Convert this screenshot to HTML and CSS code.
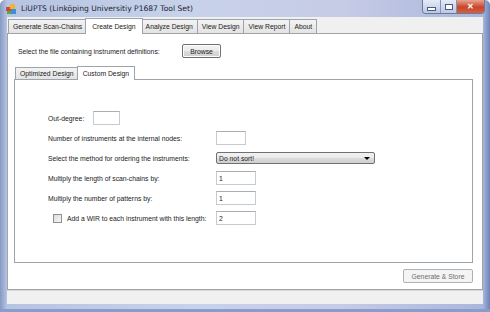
FILE: index.html
```html
<!DOCTYPE html>
<html>
<head>
<meta charset="utf-8">
	<title>LiUPTS</title>
	<link rel="stylesheet" href="styles.css">
</head>
<body>
	<div class="window">
		<div class="titlebar">
			<svg class="app-icon" width="11" height="10" viewBox="0 0 11 10">
				<rect x="0" y="3" width="5" height="4" fill="#d9442b"/>
				<rect x="4" y="0" width="5" height="5" fill="#f2b233"/>
				<rect x="5" y="5" width="5" height="5" fill="#3a8fd6"/>
				<rect x="1" y="7" width="4" height="3" fill="#5aa83a"/>
			</svg>
			<span class="title">LiUPTS (Linköping Universitiy P1687 Tool Set)</span>
			<div class="caption-btns">
				<span class="cap cap-min"><i></i></span>
				<span class="cap cap-max"><i></i></span>
				<span class="cap cap-close">&#x2715;</span>
			</div>
		</div>

		<div class="client">
			<ul class="tabs">
				<li>Generate Scan-Chains</li>
				<li class="active">Create Design</li>
				<li>Analyze Design</li>
				<li>View Design</li>
				<li>View Report</li>
				<li>About</li>
			</ul>
			<div class="tabpage">
				<div class="file-row">
					<span>Select the file containing instrument definitions:</span>
					<button class="btn">Browse</button>
				</div>

				<ul class="tabs inner">
					<li>Optimized Design</li>
					<li class="active">Custom Design</li>
				</ul>
				<div class="inner-page">
					<div class="row">
						<label class="short">Out-degree:</label>
						<input class="box tiny" type="text">
					</div>
					<div class="row">
						<label class="col">Number of instruments at the internal nodes:</label>
						<input class="box small" type="text">
					</div>
					<div class="row">
						<label class="col">Select the method for ordering the instruments:</label>
						<div class="combo">Do not sort!<span class="arrow"></span></div>
					</div>
					<div class="row">
						<label class="col">Multiply the length of scan-chains by:</label>
						<input class="box" type="text" value="1">
					</div>
					<div class="row">
						<label class="col">Multiply the number of patterns by:</label>
						<input class="box" type="text" value="1">
					</div>
					<div class="row">
						<label class="col check"><span class="checkbox"></span>Add a WIR to each instrument with this length:</label>
						<input class="box" type="text" value="2">
					</div>
				</div>

				<div class="actions">
					<button class="btn disabled">Generate &amp; Store</button>
				</div>
			</div>
			<div class="status"></div>
		</div>
	</div>
</body>
</html>
```

FILE: styles.css
```css
body,ul,li{padding: 0;margin: 0;list-style: none;}
body{background-color: #fff;font-family: "Liberation Sans", Arial, sans-serif;font-size: 6.8px;color: #222;}

.window{width: 490px;height: 312px;box-sizing: border-box;display: flex;flex-direction: column;padding: 0 7px 8px 7px;border-radius: 5px 5px 0 0;background: linear-gradient(to right, #8699c4 0, #b6c4e2 7px, #c8d2ea 40%, #c6cbe6 70%, #a9b6dc 483px, #6f82b6 100%);box-shadow: inset 0 -3px 0 #8a9ccb;}

.titlebar{height: 17px;display: flex;align-items: center;margin: 0 -7px;padding: 0 5px 0 6px;}
.app-icon{margin-right: 4px;}
.title{font-family: "DejaVu Sans", sans-serif;font-size: 7.6px;color: #1c2435;flex: 1;}
.caption-btns{display: flex;align-self: flex-start;border: 1px solid #6b7a9a;border-top: none;border-radius: 0 0 4px 4px;overflow: hidden;height: 13px;}
.cap{display: flex;align-items: center;justify-content: center;height: 13px;background: linear-gradient(#e4ebf6, #b9c8e2);border-right: 1px solid #8595b7;}
.cap-min{width: 17px;}
.cap-max{width: 15px;}
.cap-min i{width: 7px;height: 2px;background: #fff;border: 1px solid #4b5b80;margin-top: 4px;}
.cap-max i{width: 6px;height: 4px;border: 1px solid #4b5b80;background: #fff;}
.cap-close{width: 27px;border: none;background: linear-gradient(#e8a48e, #c8452b 55%, #d5603f);color: #fff;font-size: 8px;font-weight: bold;}

.client{flex: 1;display: flex;flex-direction: column;background-color: #f0f0f0;}

.tabs{display: flex;align-items: flex-end;height: 16px;padding-left: 1px;}
.tabs li{height: 13px;line-height: 13px;padding: 0 4px;border: 1px solid #9ea4ac;border-bottom: none;border-left: none;background: linear-gradient(#f3f3f3, #e3e3e3);color: #222;white-space: nowrap;}
.tabs li:first-child{border-left: 1px solid #9ea4ac;}
.tabs li.active{height: 15px;line-height: 15px;background: #fff;border-left: 1px solid #9ea4ac;margin: 0 -1px 0 -2px;padding: 0 6px;position: relative;z-index: 1;margin-bottom: -1px;}

.tabpage{flex: 1;display: flex;flex-direction: column;background: #fff;border: 1px solid #9ea4ac;padding: 10px 9px 6px 6px;}

.file-row{display: flex;align-items: center;height: 14px;padding-left: 4px;}
.file-row span{width: 164px;}

.btn{font-family: inherit;font-size: 6.8px;color: #222;height: 14px;padding: 0;border: 1px solid #707070;border-radius: 2px;background: linear-gradient(#f2f2f2 0, #ebebeb 50%, #dddddd 50%, #cfcfcf 100%);box-shadow: inset 0 0 0 1px #fcfcfc;}
.file-row .btn{width: 39px;}

.tabs.inner{margin-top: 8px;height: 13px;}
.tabs.inner li{height: 11px;line-height: 11px;padding: 0 4px;}
.tabs.inner li.active{height: 13px;line-height: 13px;padding: 0 5px;}

.inner-page{flex: 1;border: 1px solid #9ea4ac;background: #fff;padding: 31px 0 0 33px;display: flex;flex-direction: column;gap: 6px;}

.row{display: flex;align-items: center;height: 14px;}
.row label.short{margin-right: 9px;}
.row label.col{width: 164px;margin-right: 4px;}
.check{display: flex;align-items: center;margin-left: 5px;width: 159px !important;}
.checkbox{width: 7px;height: 7px;border: 1px solid #8f8f8f;background: linear-gradient(135deg, #dcdcdc, #f6f6f6);margin-right: 5px;}

.box{font-family: inherit;font-size: 6.8px;color: #222;width: 40px;height: 14px;box-sizing: border-box;border: 1px solid #c5cbd2;border-top-color: #abadb3;padding: 0 2px;outline: none;}
.box.small{width: 30px;}
.box.tiny{width: 27px;}

.combo{position: relative;width: 159px;height: 12px;line-height: 12px;box-sizing: border-box;border: 1px solid #707070;border-radius: 2px;padding-left: 2px;background: linear-gradient(#f2f2f2 0, #ebebeb 50%, #dddddd 50%, #cfcfcf 100%);}
.arrow{position: absolute;right: 4px;top: 4px;border: 3px solid transparent;border-top: 3px solid #000;border-bottom: none;}

.actions{display: flex;justify-content: flex-end;padding-top: 6px;}
.btn.disabled{width: 70px;height: 14px;color: #6d6d6d;border-color: #adb2b5;background: #f4f4f4;box-shadow: none;}

.status{height: 13px;border-top: 1px solid #d7d7d7;}
```
